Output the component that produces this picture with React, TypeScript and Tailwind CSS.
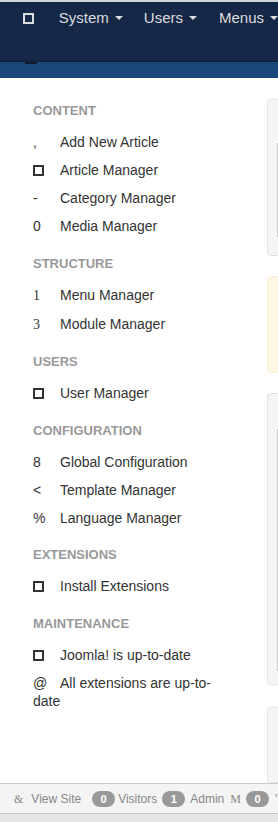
import React from "react";

type Item = { icon: React.ReactNode; label: string };

const Box = ({ color = "border-[#333]" }: { color?: string }) => (
  <span className={`inline-block w-[11px] h-[11px] border-2 ${color} align-[-1px]`} />
);

const Serif = ({ c }: { c: string }) => (
  <span style={{ fontFamily: '"Liberation Serif", "Times New Roman", serif' }}>{c}</span>
);

const sections: { title: string; items: Item[] }[] = [
  {
    title: "CONTENT",
    items: [
      { icon: ",", label: "Add New Article" },
      { icon: <Box />, label: "Article Manager" },
      { icon: "-", label: "Category Manager" },
      { icon: "0", label: "Media Manager" },
    ],
  },
  {
    title: "STRUCTURE",
    items: [
      { icon: <Serif c="1" />, label: "Menu Manager" },
      { icon: <Serif c="3" />, label: "Module Manager" },
    ],
  },
  { title: "USERS", items: [{ icon: <Box />, label: "User Manager" }] },
  {
    title: "CONFIGURATION",
    items: [
      { icon: "8", label: "Global Configuration" },
      { icon: "<", label: "Template Manager" },
      { icon: "%", label: "Language Manager" },
    ],
  },
  { title: "EXTENSIONS", items: [{ icon: <Box />, label: "Install Extensions" }] },
  {
    title: "MAINTENANCE",
    items: [
      { icon: <Box />, label: "Joomla! is up-to-date" },
      { icon: "@", label: "All extensions are up-to-date" },
    ],
  },
];

const Caret = () => (
  <span className="inline-block ml-[6px] w-0 h-0 border-t-[4px] border-t-[#dddddd] border-x-[4px] border-x-transparent align-middle" />
);

const Badge = ({ n }: { n: string }) => (
  <span className="inline-flex items-center justify-center h-[16px] w-[23px] rounded-full bg-[#999999] text-white text-[11px] font-bold leading-none">
    {n}
  </span>
);

export default function App() {
  return (
    <div
      className="w-[278px] h-[822px] flex flex-col overflow-hidden bg-white"
      style={{ fontFamily: '"Liberation Sans", Arial, Helvetica, sans-serif' }}
    >
      <div className="h-[2px] bg-[#cfd2d6] shrink-0" />
      <div className="h-[59px] bg-[#152848] shrink-0 border-b border-[#0d1e37] box-content">
        <div className="flex items-center pl-[23px] pt-[6px] h-[20px] box-content text-[15px] text-[#dddddd] whitespace-nowrap">
          <Box color="border-[#dddddd]" />
          <span className="ml-[25px]">System</span>
          <Caret />
          <span className="ml-[21px]">Users</span>
          <Caret />
          <span className="ml-[22px]">Menus</span>
          <Caret />
        </div>
      </div>
      <div className="h-[16px] bg-[#1b4a7a] shrink-0 overflow-hidden">
        <div className="flex items-start pl-[25px] -mt-[16px] h-[18px]">
          <span className="inline-block w-[12px] h-[18px] bg-[#111b2a]" />
          <span className="ml-[26px] text-[20px] leading-[18px] text-[#6b3a3a]">Control Panel</span>
        </div>
      </div>
      <div className="flex-1 flex overflow-hidden">
        <div className="w-[267px] shrink-0 pl-[33px] pr-[37px] pt-[24px]">
          {sections.map((s, i) => (
            <div key={s.title} className={i === 0 ? "" : "mt-[14.6px]"}>
              <div className="text-[13px] font-bold leading-[18px] text-[#999999] mb-[8px]">{s.title}</div>
              <ul>
                {s.items.map((it) => (
                  <li key={it.label} className="py-[5px] leading-[18px] text-[14px] text-[#333333]">
                    <span className="inline-block w-[27px]">{it.icon}</span>
                    {it.label}
                  </li>
                ))}
              </ul>
            </div>
          ))}
        </div>
        <div className="w-[300px] shrink-0 pt-[21px] flex flex-col gap-[20px]">
          <div className="h-[163px] bg-[#f5f5f5] border border-[#e3e3e3] rounded-[4px] pl-[9px] pt-[43px]">
            <div className="h-[94px] border-l border-t border-b border-[#cfcfcf] bg-[#f5f5f5]" />
          </div>
          <div className="h-[102px] bg-[#fcf8e3] border border-[#fbeed5] rounded-[4px]" />
          <div className="h-[305px] bg-[#f5f5f5] border border-[#e3e3e3] rounded-[4px] pl-[9px] pt-[35px]">
            <div className="h-[242px] border-l border-t border-b border-[#cfcfcf] bg-[#f5f5f5]" />
          </div>
          <div className="h-[80px] mt-[2px] bg-[#f5f5f5] border border-[#e3e3e3] rounded-[4px]" />
        </div>
      </div>
      <div className="shrink-0 h-[29px] border-t border-b border-[#c9c9c9] bg-[#f4f4f4] box-content flex items-center pl-[14px] text-[12px] text-[#888888] whitespace-nowrap">
        <span style={{ fontFamily: '"Liberation Serif", "Times New Roman", serif' }}>&amp;</span>
        <span className="ml-[8px]">View Site</span>
        <span className="ml-[11px]"><Badge n="0" /></span>
        <span className="ml-[3px]">Visitors</span>
        <span className="ml-[5px]"><Badge n="1" /></span>
        <span className="ml-[5px]">Admin</span>
        <span className="ml-[6px]" style={{ fontFamily: '"Liberation Serif", "Times New Roman", serif' }}>M</span>
        <span className="ml-[5px]"><Badge n="0" /></span>
        <span className="ml-[6px]">'</span>
      </div>
      <div className="shrink-0 h-[8px] bg-[#e6e6e6]" />
    </div>
  );
}
